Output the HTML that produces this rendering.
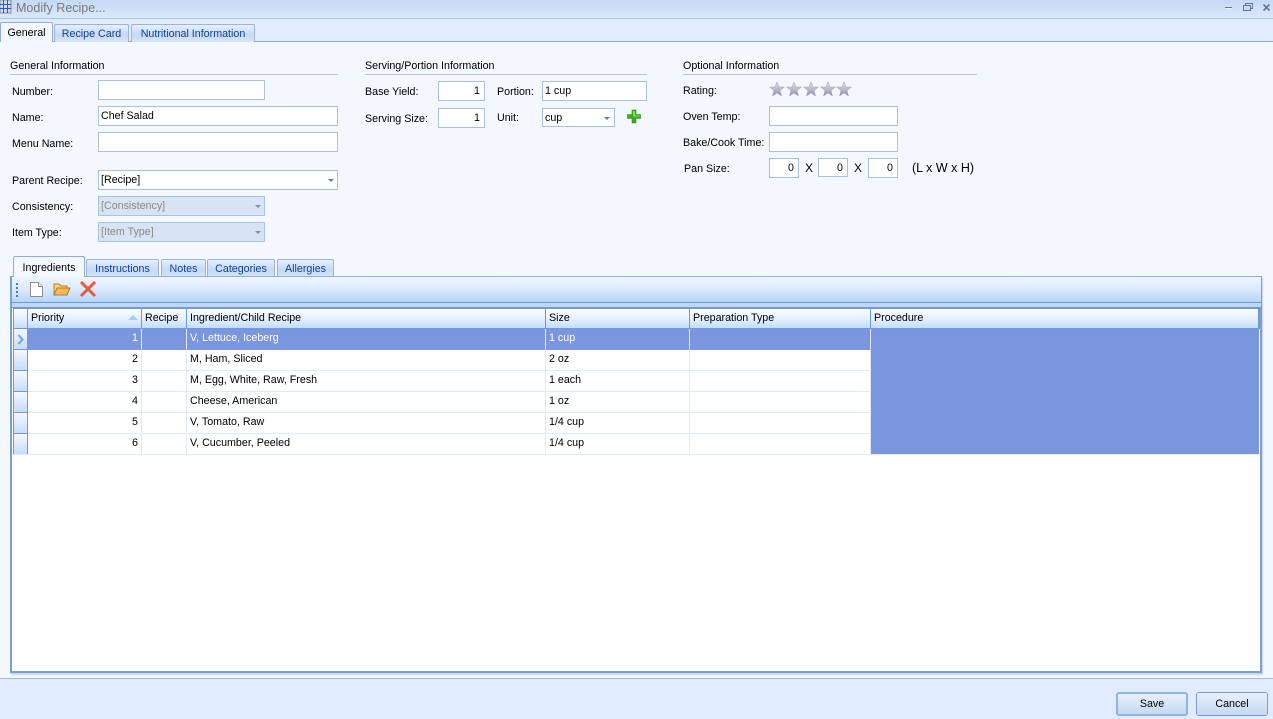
<!DOCTYPE html>
<html><head><meta charset="utf-8"><title>Modify Recipe</title>
<style>
html,body{margin:0;padding:0;width:1273px;height:719px;overflow:hidden;background:#e0ecfd;}
body{font-family:"Liberation Sans","DejaVu Sans",sans-serif;font-size:10.7px;color:#000;position:relative;}
.a{position:absolute;box-sizing:border-box;white-space:nowrap;}
.l{position:absolute;white-space:nowrap;line-height:14px;height:14px;}
.i{position:absolute;box-sizing:border-box;background:#fff;border:1px solid #abc1de;line-height:19px;padding-left:2px;white-space:nowrap;}
.r{text-align:right;padding:0 4px 0 0;}
.d{background:#d8e3f3;color:#8a8a8a;}
.ar{position:absolute;width:0;height:0;border-left:3px solid transparent;border-right:3px solid transparent;border-top:3px solid #5a7cae;}
.h{position:absolute;height:1px;background:#b4c8e3;}
.tab{position:absolute;box-sizing:border-box;text-align:center;border:1px solid #9db4d3;border-bottom:none;border-radius:2px 2px 0 0;background:linear-gradient(#e4eefd,#c5d9f6 60%,#d6e4fa);color:#15428b;}
.tab.on{background:#f3f7fe;color:#000;border-color:#95add0;}
.th{position:absolute;top:309px;height:19px;box-sizing:border-box;border-right:1px solid #6c9bd6;background:linear-gradient(#fbfdff,#e6f0fe 50%,#c6dcfa);line-height:19px;padding-left:3px;}
.c{position:absolute;box-sizing:border-box;height:21px;line-height:18px;border-right:1px solid #e0ebfa;border-bottom:1px solid #e0ebfa;padding-left:3px;background:#fff;white-space:nowrap;}
.c.n{text-align:right;padding:0 3px 0 0;}
.s{background:#7a96df;color:#fff;border-bottom-color:#7a96df;}
.rh{position:absolute;left:13px;width:15px;height:21px;box-sizing:border-box;border:1px solid #6c9bd6;border-top:none;background:linear-gradient(#f4f8ff,#c8dcfa);}
.btn{position:absolute;top:692px;height:24px;box-sizing:border-box;border:1px solid #7f9dc6;border-radius:3px;text-align:center;line-height:23px;background:linear-gradient(#e8f0fc,#d6e4f8 50%,#c6d8f2);}
</style></head><body>

<!-- title bar -->
<div class="a" style="left:0;top:0;width:1273px;height:19px;background:linear-gradient(#c6d9f6,#dbe8fb);border-bottom:1px solid #a5c7f3;"></div>
<svg class="a" style="left:0;top:0" width="12" height="14" viewBox="0 0 12 14"><rect x="0" y="0" width="11" height="13" fill="#cfdcf0" stroke="#7d8ca8"/><path d="M3.500 0V13M7.500 0V13M0 4.500H11M0 8.500H11" stroke="#2a55c8" fill="none"/></svg>
<div class="l" style="left:16px;top:1px;font-size:12.5px;color:#77797d;">Modify Recipe...</div>
<div class="a" style="left:1225px;top:7px;width:7px;height:1px;background:#66738a;"></div>
<div class="a" style="left:1225px;top:8px;width:7px;height:1px;background:#f0f5fd;"></div>
<svg class="a" style="left:1243px;top:3px" width="10" height="8"><rect x="2.500" y=".5" width="7" height="5" fill="none" stroke="#66738a"/><rect x=".5" y="2.500" width="7" height="5" fill="#c9d9f2" stroke="#66738a"/></svg>
<svg class="a" style="left:1263px;top:4px" width="7" height="7"><path d="M.5 .5L6.500 6.500M6.500 .5L.5 6.500" stroke="#66738a" stroke-width="1.600" fill="none"/></svg>

<!-- outer panel -->
<div class="a" style="left:0;top:41px;width:1273px;height:638px;background:#f3f7fe;border-top:1px solid #95a8c4;border-bottom:1px solid #a9bddb;"></div>
<div class="tab on" style="left:0;top:22px;width:53px;height:20px;line-height:20px;z-index:2;">General</div>
<div class="tab" style="left:54px;top:24px;width:75px;height:18px;line-height:18px;">Recipe Card</div>
<div class="tab" style="left:131px;top:24px;width:124px;height:18px;line-height:18px;">Nutritional Information</div>

<!-- General Information -->
<div class="l" style="left:10px;top:59px;">General Information</div>
<div class="h" style="left:10px;top:74px;width:328px;"></div>
<div class="l" style="left:12px;top:85px;">Number:</div>
<div class="i" style="left:98px;top:80px;width:167px;height:20px;"></div>
<div class="l" style="left:12px;top:111px;">Name:</div>
<div class="i" style="left:98px;top:106px;width:240px;height:20px;">Chef Salad</div>
<div class="l" style="left:12px;top:137px;">Menu Name:</div>
<div class="i" style="left:98px;top:132px;width:240px;height:20px;"></div>
<div class="l" style="left:12px;top:174px;">Parent Recipe:</div>
<div class="i" style="left:98px;top:170px;width:240px;height:20px;">[Recipe]</div>
<div class="ar" style="left:328px;top:179px;"></div>
<div class="l" style="left:12px;top:200px;">Consistency:</div>
<div class="i d" style="left:98px;top:196px;width:167px;height:20px;">[Consistency]</div>
<div class="ar" style="left:255px;top:205px;border-top-color:#8a8f99;"></div>
<div class="l" style="left:12px;top:226px;">Item Type:</div>
<div class="i d" style="left:98px;top:222px;width:167px;height:20px;">[Item Type]</div>
<div class="ar" style="left:255px;top:231px;border-top-color:#8a8f99;"></div>

<!-- Serving -->
<div class="l" style="left:365px;top:59px;">Serving/Portion Information</div>
<div class="h" style="left:365px;top:74px;width:282px;"></div>
<div class="l" style="left:365px;top:85px;">Base Yield:</div>
<div class="i r" style="left:438px;top:81px;width:47px;height:20px;">1</div>
<div class="l" style="left:497px;top:85px;">Portion:</div>
<div class="i" style="left:542px;top:81px;width:105px;height:20px;">1 cup</div>
<div class="l" style="left:365px;top:112px;">Serving Size:</div>
<div class="i r" style="left:438px;top:108px;width:47px;height:20px;">1</div>
<div class="l" style="left:497px;top:111px;">Unit:</div>
<div class="i" style="left:542px;top:108px;width:73px;height:19px;">cup</div>
<div class="ar" style="left:604px;top:117px;"></div>
<svg class="a" style="left:626px;top:109px" width="16" height="15" viewBox="0 0 16 15"><path d="M6 1H10V5.500H14.500V9.500H10V14H6V9.500H1.500V5.500H6Z" fill="#3fa81e" stroke="#2f8a17" stroke-width=".6"/><path d="M7 2H9V6.500H13.500V7.500H7Z" fill="#86dc5c"/></svg>

<!-- Optional -->
<div class="l" style="left:683px;top:59px;">Optional Information</div>
<div class="h" style="left:683px;top:74px;width:294px;"></div>
<div class="l" style="left:683px;top:84px;">Rating:</div>
<svg class="a" style="left:769px;top:81px" width="84" height="17" viewBox="0 0 84 17">
<defs><linearGradient id="st" x1="0" y1="0" x2="0" y2="1"><stop offset="0" stop-color="#e4e4ea"/><stop offset=".5" stop-color="#bcbcc8"/><stop offset="1" stop-color="#8d8db8"/></linearGradient></defs>
<g fill="url(#st)" stroke="#a0a0b0" stroke-width=".5">
<path d="M8 1L10 6H15.500L11 9.500L12.500 15L8 12L3.500 15L5 9.500L.5 6H6Z"/>
<path d="M25 1L27 6H32.500L28 9.500L29.500 15L25 12L20.500 15L22 9.500L17.500 6H23Z"/>
<path d="M42 1L44 6H49.500L45 9.500L46.500 15L42 12L37.500 15L39 9.500L34.500 6H40Z"/>
<path d="M59 1L61 6H66.500L62 9.500L63.500 15L59 12L54.500 15L56 9.500L51.500 6H57Z"/>
<path d="M75 1L77 6H82.500L78 9.500L79.500 15L75 12L70.500 15L72 9.500L67.500 6H73Z"/>
</g></svg>
<div class="l" style="left:683px;top:110px;">Oven Temp:</div>
<div class="i" style="left:769px;top:106px;width:129px;height:20px;"></div>
<div class="l" style="left:683px;top:136px;">Bake/Cook Time:</div>
<div class="i" style="left:769px;top:132px;width:129px;height:20px;"></div>
<div class="l" style="left:684px;top:162px;">Pan Size:</div>
<div class="i r" style="left:769px;top:158px;width:30px;height:20px;">0</div>
<div class="l" style="left:805px;top:161px;font-size:12px;">X</div>
<div class="i r" style="left:818px;top:158px;width:30px;height:19px;">0</div>
<div class="l" style="left:854px;top:161px;font-size:12px;">X</div>
<div class="i r" style="left:868px;top:158px;width:30px;height:20px;">0</div>
<div class="l" style="left:912px;top:161px;font-size:12.5px;">(L x W x H)</div>

<!-- inner tabs -->
<div class="tab on" style="left:13px;top:256px;width:72px;height:21px;line-height:22px;z-index:2;">Ingredients</div>
<div class="tab" style="left:86px;top:259px;width:73px;height:18px;line-height:18px;">Instructions</div>
<div class="tab" style="left:161px;top:259px;width:45px;height:18px;line-height:18px;">Notes</div>
<div class="tab" style="left:207px;top:259px;width:68px;height:18px;line-height:18px;">Categories</div>
<div class="tab" style="left:277px;top:259px;width:57px;height:18px;line-height:18px;">Allergies</div>

<!-- grid panel -->
<div class="a" style="left:10px;top:276px;width:1252px;height:397px;background:#fff;border:2px solid #7e9fcc;border-top:1px solid #8fb0dc;box-shadow:1px 2px 1px #c6d6ee;"></div>
<div class="a" style="left:12px;top:277px;width:1249px;height:26px;background:linear-gradient(#eef5ff,#dbe9fc 50%,#b9d3f6);border-bottom:1px solid #6c9bd6;"></div>
<div class="a" style="left:12px;top:303px;width:1249px;height:5px;background:#bfd6f6;border-bottom:1px solid #6c9bd6;"></div>
<div class="a" style="left:16px;top:283px;width:2px;height:14px;background:repeating-linear-gradient(#3f7fcf 0 2px,transparent 2px 4px);"></div>
<svg class="a" style="left:29px;top:282px" width="15" height="15" viewBox="0 0 15 15"><path d="M1.500.5H9.500L13.500 4.500V14.500H1.500Z" fill="#fff" stroke="#8c8c8c"/><path d="M9.500.5V4.500H13.500" fill="#eee" stroke="#8c8c8c"/></svg>
<svg class="a" style="left:53px;top:282px" width="18" height="15" viewBox="0 0 18 15"><path d="M1 13V2H6L8 4H14V6" fill="#f7d48a" stroke="#b5792a"/><path d="M1 13L4 6H17L14 13Z" fill="#f2b95c" stroke="#b5792a"/></svg>
<svg class="a" style="left:79px;top:280px" width="18" height="18" viewBox="0 0 18 18"><path d="M2 2L16 16M16 2L2 16" stroke="#e25b3c" stroke-width="3" fill="none"/></svg>

<!-- grid header -->
<div class="a" style="left:13px;top:308px;width:1247px;height:1px;background:#6c9bd6;"></div>
<div class="a" style="left:13px;top:328px;width:1247px;height:1px;background:#6c9bd6;"></div>
<div class="a" style="left:1259px;top:308px;width:1px;height:21px;background:#6c9bd6;"></div>
<div class="th" style="left:13px;width:15px;border-left:1px solid #6c9bd6;"></div>
<div class="th" style="left:28px;width:114px;">Priority</div>
<div class="a" style="left:128px;top:315px;width:0;height:0;border-left:5px solid transparent;border-right:5px solid transparent;border-bottom:5px solid #a9c8ee;"></div>
<div class="th" style="left:142px;width:45px;">Recipe</div>
<div class="th" style="left:187px;width:359px;">Ingredient/Child Recipe</div>
<div class="th" style="left:546px;width:144px;">Size</div>
<div class="th" style="left:690px;width:181px;">Preparation Type</div>
<div class="th" style="left:871px;width:388px;">Procedure</div>

<!-- row headers -->
<div class="rh" style="top:329px;"></div>
<div class="rh" style="top:350px;"></div>
<div class="rh" style="top:371px;"></div>
<div class="rh" style="top:392px;"></div>
<div class="rh" style="top:413px;"></div>
<div class="rh" style="top:434px;"></div>
<svg class="a" style="left:17px;top:334px" width="8" height="11"><path d="M1.500 1L5.500 5.500L1.500 10" fill="none" stroke="#6fa5e6" stroke-width="2"/></svg>

<!-- rows -->
<div class="c n s" style="left:28px;top:329px;width:114px;">1</div><div class="c s" style="left:142px;top:329px;width:45px;"></div><div class="c s" style="left:187px;top:329px;width:359px;">V, Lettuce, Iceberg</div><div class="c s" style="left:546px;top:329px;width:144px;">1 cup</div><div class="c s" style="left:690px;top:329px;width:181px;"></div>
<div class="c n" style="left:28px;top:350px;width:114px;">2</div><div class="c" style="left:142px;top:350px;width:45px;"></div><div class="c" style="left:187px;top:350px;width:359px;">M, Ham, Sliced</div><div class="c" style="left:546px;top:350px;width:144px;">2 oz</div><div class="c" style="left:690px;top:350px;width:181px;"></div>
<div class="c n" style="left:28px;top:371px;width:114px;">3</div><div class="c" style="left:142px;top:371px;width:45px;"></div><div class="c" style="left:187px;top:371px;width:359px;">M, Egg, White, Raw, Fresh</div><div class="c" style="left:546px;top:371px;width:144px;">1 each</div><div class="c" style="left:690px;top:371px;width:181px;"></div>
<div class="c n" style="left:28px;top:392px;width:114px;">4</div><div class="c" style="left:142px;top:392px;width:45px;"></div><div class="c" style="left:187px;top:392px;width:359px;">Cheese, American</div><div class="c" style="left:546px;top:392px;width:144px;">1 oz</div><div class="c" style="left:690px;top:392px;width:181px;"></div>
<div class="c n" style="left:28px;top:413px;width:114px;">5</div><div class="c" style="left:142px;top:413px;width:45px;"></div><div class="c" style="left:187px;top:413px;width:359px;">V, Tomato, Raw</div><div class="c" style="left:546px;top:413px;width:144px;">1/4 cup</div><div class="c" style="left:690px;top:413px;width:181px;"></div>
<div class="c n" style="left:28px;top:434px;width:114px;">6</div><div class="c" style="left:142px;top:434px;width:45px;"></div><div class="c" style="left:187px;top:434px;width:359px;">V, Cucumber, Peeled</div><div class="c" style="left:546px;top:434px;width:144px;">1/4 cup</div><div class="c" style="left:690px;top:434px;width:181px;"></div>
<div class="a" style="left:871px;top:329px;width:388px;height:125px;background:#7a96df;"></div>
<div class="a" style="left:13px;top:454px;width:1247px;height:1px;background:#e0ebfa;"></div>

<!-- buttons -->
<div class="btn" style="left:1116px;width:72px;border:2px solid #8fb5e0;border-radius:3px;line-height:21px;">Save</div>
<div class="btn" style="left:1196px;width:72px;">Cancel</div>
</body></html>
